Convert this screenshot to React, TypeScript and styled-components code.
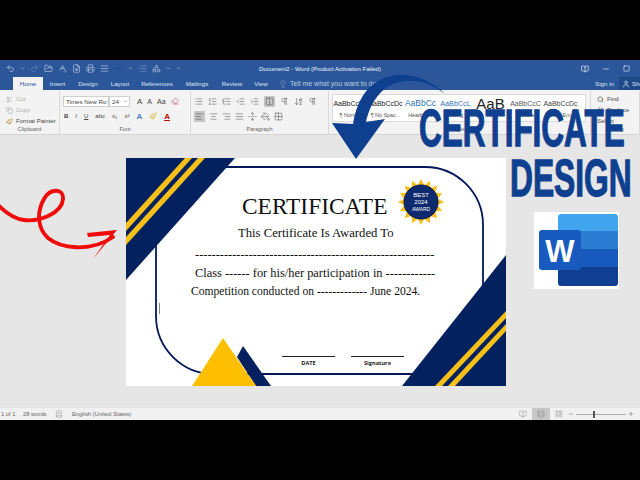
import React from 'react';
import styled, { createGlobalStyle } from 'styled-components';
import {
  AlignCenter, AlignJustify, AlignLeft, AlignRight, ArrowDownAZ, BookOpen, ChevronDown, Columns2,
  Copy, FileSearch, FolderOpen, Grid2x2, IndentDecrease, IndentIncrease, Lightbulb, LayoutGrid, List, ListOrdered,
  ListTree, Minus, PaintBucket, Paintbrush, Pilcrow, Plus, Redo2, Replace, Rows3, Scissors, Search,
  Shapes, Square, SpellCheck, Undo2, User, UnfoldVertical, BookText, Eraser, Printer,
} from 'lucide-react';

const GlobalStyle = createGlobalStyle`
  html, body { margin: 0; padding: 0; background: #000; }
`;

const Screen = styled.div`
  position: relative;
  width: 640px;
  height: 480px;
  padding: 60px 0;
  box-sizing: border-box;
  background: #000;
  overflow: hidden;
  font-family: "Liberation Sans", Arial, sans-serif;
`;

const Word = styled.div`
  height: 360px;
  display: flex;
  flex-direction: column;
`;

const TitleBar = styled.div`
  height: 17px;
  flex: none;
  background: #2b579a;
  color: #eef3fa;
  display: flex;
  align-items: center;
  padding: 0 10px 0 6px;
  font-size: 6px;
`;

const Qat = styled.div`
  display: flex;
  align-items: center;
  gap: 5px;
  width: 253px;
  flex: none;
`;

const DocTitle = styled.div`
  width: 122px;
  white-space: nowrap;
`;

const WinButtons = styled.div`
  margin-left: auto;
  display: flex;
  align-items: center;
  gap: 13px;
`;

const TabBar = styled.div`
  height: 13px;
  flex: none;
  background: #2b579a;
  color: #dce6f3;
  display: flex;
  align-items: stretch;
  font-size: 6.2px;
  padding-left: 13px;
`;

const Tab = styled.div<{ $active?: boolean; $w: number }>`
  width: ${p => p.$w}px;
  flex: none;
  display: flex;
  align-items: center;
  justify-content: center;
  background: ${p => (p.$active ? '#f3f3f3' : 'transparent')};
  color: ${p => (p.$active ? '#2b579a' : '#dce6f3')};
`;

const TellMe = styled.div`
  display: flex;
  align-items: center;
  gap: 3px;
  margin-left: 5px;
  font-size: 7px;
  opacity: 0.8;
`;

const Account = styled.div`
  margin-left: auto;
  display: flex;
  align-items: center;
  gap: 5px;
`;

const ShareBox = styled.div`
  display: flex;
  align-items: center;
  gap: 2px;
  height: 13px;
  width: 21px;
  background: #1f4a8a;
  padding-left: 3px;
  box-sizing: border-box;
  overflow: hidden;
  svg { flex: none; }
`;

const Ribbon = styled.div`
  height: 45px;
  flex: none;
  background: #f3f3f3;
  border-bottom: 1px solid #d4d4d4;
  box-sizing: border-box;
  display: flex;
  color: #444;
  font-size: 6px;
`;

const Group = styled.div<{ $w: number }>`
  width: ${p => p.$w}px;
  flex: none;
  box-sizing: border-box;
  border-right: 1px solid #d9d9d9;
  margin-top: 1px;
  padding: 3px 3px 0;
  display: flex;
  flex-direction: column;
`;

const GroupBody = styled.div`
  flex: 1;
  display: flex;
  flex-direction: column;
  gap: 3px;
  min-height: 0;
`;

const GroupLabel = styled.div`
  height: 9px;
  line-height: 9px;
  text-align: center;
  color: #666;
  font-size: 5.6px;
`;

const Row = styled.div<{ $gap?: number }>`
  display: flex;
  align-items: center;
  gap: ${p => p.$gap ?? 3}px;
  height: 12px;
  white-space: nowrap;
`;

const FieldRow = styled(Row)`
  margin-top: 1px;
`;

const ClipColumn = styled.div`
  display: flex;
  flex-direction: column;
  gap: 1px;
`;

const ClipRow = styled(Row)<{ $muted?: boolean }>`
  height: 10px;
  padding-left: 3px;
  color: ${p => (p.$muted ? '#aaa' : '#444')};
`;

const FontField = styled.div<{ $w: number }>`
  width: ${p => p.$w}px;
  height: 11px;
  box-sizing: border-box;
  background: #fff;
  border: 1px solid #cfcfcf;
  padding: 0 1px 0 2px;
  display: flex;
  align-items: center;
  justify-content: space-between;
  font-size: 6.2px;
  overflow: hidden;
  white-space: nowrap;
  svg { flex: none; }
`;

const FieldPair = styled.div`
  display: flex;
  margin-right: 2px;
`;

const Glyph = styled.span<{ $b?: boolean; $i?: boolean; $u?: boolean; $c?: string; $s?: number }>`
  font-weight: ${p => (p.$b ? 700 : 400)};
  font-style: ${p => (p.$i ? 'italic' : 'normal')};
  text-decoration: ${p => (p.$u ? 'underline' : 'none')};
  color: ${p => p.$c || '#444'};
  font-size: ${p => p.$s || 6}px;
`;

const Tool = styled.span<{ $on?: boolean }>`
  display: inline-flex;
  align-items: center;
  justify-content: center;
  height: 11px;
  padding: 0 1px;
  background: ${p => (p.$on ? '#c6c6c6' : 'transparent')};
`;

const Gallery = styled.div`
  width: 254px;
  height: 28px;
  flex: none;
  background: #fff;
  border: 1px solid #dadada;
  box-sizing: border-box;
  display: grid;
  grid-template-columns: repeat(7, 35px);
  overflow: hidden;
`;

const StyleCell = styled.div`
  display: flex;
  flex-direction: column;
  align-items: center;
  overflow: hidden;
  white-space: nowrap;
`;

const StyleSample = styled.div<{ $c: string; $s: number }>`
  height: 17px;
  line-height: 17px;
  color: ${p => p.$c};
  font-size: ${p => p.$s}px;
`;

const StyleName = styled.div`
  font-size: 5.4px;
  color: #555;
`;

const Canvas = styled.div`
  flex: 1;
  background: #e6e6e6;
  padding: 23px 0 0 126px;
  min-height: 0;
`;

const Paper = styled.div`
  position: relative;
  width: 380px;
  height: 228px;
  background: #fff;
  box-sizing: border-box;
  font-family: "Liberation Serif", "Times New Roman", serif;
  color: #111;
  overflow: hidden;
`;

const PaperArt = styled.svg`
  position: absolute;
  left: 0;
  top: 0;
`;

const PaperText = styled.div`
  position: relative;
  height: 100%;
  display: flex;
  flex-direction: column;
  padding-top: 35px;
  box-sizing: border-box;
`;

const CertTitle = styled.div`
  height: 27px;
  line-height: 27px;
  margin-left: 116px;
  font-size: 23.4px;
  white-space: nowrap;
`;

const CertLine = styled.div<{ $left: number; $mt: number; $size: number }>`
  margin: ${p => p.$mt}px 0 0 ${p => p.$left}px;
  height: 16px;
  line-height: 16px;
  font-size: ${p => p.$size}px;
  white-space: nowrap;
`;

const SignRow = styled.div`
  margin: 56px 0 0 156px;
  display: flex;
  gap: 16px;
`;

const SignBlock = styled.div`
  width: 53px;
  border-top: 1.5px solid #222;
  padding-top: 2px;
  text-align: center;
  font-family: "Open Sans", "Liberation Sans", sans-serif;
  font-size: 5.6px;
  font-weight: 700;
  color: #222;
`;

const Caret = styled.div`
  position: absolute;
  left: 33px;
  top: 145px;
  width: 1px;
  height: 11px;
  background: #888;
`;

const StatusBar = styled.div`
  height: 13px;
  flex: none;
  background: #f1f1f1;
  border-top: 1px solid #e2e2e2;
  box-sizing: border-box;
  display: flex;
  align-items: center;
  color: #666;
  font-size: 5.8px;
  padding: 0 6px 0 1px;
`;

const StatusText = styled.span<{ $w: number }>`
  width: ${p => p.$w}px;
  flex: none;
  white-space: nowrap;
`;

const StatusRight = styled.div`
  margin-left: auto;
  display: flex;
  align-items: center;
  height: 100%;
`;

const ViewButton = styled.div<{ $on?: boolean }>`
  width: 18px;
  height: 100%;
  display: flex;
  align-items: center;
  justify-content: center;
  background: ${p => (p.$on ? '#c8c8c8' : 'transparent')};
`;

const ZoomTrack = styled.div`
  position: relative;
  width: 50px;
  height: 1px;
  margin: 0 2px;
  background: #aaa;
`;

const ZoomThumb = styled.div`
  position: absolute;
  left: 17px;
  top: -3px;
  width: 2px;
  height: 7px;
  background: #555;
`;

const HeadWord = styled.div<{ $top: number; $left: number; $sx: number }>`
  position: absolute;
  top: ${p => p.$top}px;
  left: ${p => p.$left}px;
  font-size: 52px;
  line-height: 52px;
  font-weight: 700;
  color: #0f3f8f;
  -webkit-text-stroke: 1.3px #0f3f8f;
  white-space: nowrap;
  transform-origin: left top;
  transform: scaleX(${p => p.$sx});
`;

const Overlay = styled.svg<{ $top: number; $left: number }>`
  position: absolute;
  top: ${p => p.$top}px;
  left: ${p => p.$left}px;
`;

const i = { size: 9, strokeWidth: 1.3 };

const sunPoints = (() => {
  const pts: string[] = [];
  for (let n = 0; n < 32; n++) {
    const r = n % 2 === 0 ? 23 : 17;
    const a = (n * Math.PI) / 16;
    pts.push(`${(24 + r * Math.sin(a)).toFixed(1)},${(24 - r * Math.cos(a)).toFixed(1)}`);
  }
  return pts.join(' ');
})();

const styleSamples = [
  { text: 'AaBbCcDc', c: '#222', s: 7, name: '¶ Normal' },
  { text: 'AaBbCcDc', c: '#222', s: 7, name: '¶ No Spac...' },
  { text: 'AaBbCc', c: '#2e74b5', s: 8.5, name: 'Heading 1' },
  { text: 'AaBbCcL', c: '#2e74b5', s: 7.2, name: 'Heading 2' },
  { text: 'AaB', c: '#222', s: 15, name: 'Title' },
  { text: 'AaBbCcC', c: '#555', s: 7, name: 'Subtitle' },
  { text: 'AaBbCcDc', c: '#444', s: 7, name: 'Subtle Em...' },
];

const tabs = [
  { name: 'Home', w: 30 },
  { name: 'Insert', w: 29 },
  { name: 'Design', w: 32 },
  { name: 'Layout', w: 32 },
  { name: 'References', w: 42 },
  { name: 'Mailings', w: 38 },
  { name: 'Review', w: 32 },
  { name: 'View', w: 26 },
];

const App = () => (
  <Screen>
    <GlobalStyle />
    <Word>
      <TitleBar>
        <Qat>
          <Undo2 {...i} />
          <ChevronDown size={5} />
          <Redo2 {...i} opacity={0.4} />
          <FolderOpen {...i} />
          <SpellCheck {...i} />
          <FileSearch {...i} />
          <Printer {...i} />
          <AlignJustify {...i} />
          <Minus {...i} color="#1c3f7a" />
          <ChevronDown size={5} />
          <List {...i} opacity={0.6} />
          <Shapes {...i} />
          <ChevronDown size={5} />
          <ChevronDown size={5} />
        </Qat>
        <DocTitle>Document2 - Word (Product Activation Failed)</DocTitle>
        <WinButtons>
          <BookOpen size={8} />
          <Minus size={8} />
          <Square size={7} />
        </WinButtons>
      </TitleBar>
      <TabBar>
        {tabs.map(t => (
          <Tab key={t.name} $w={t.w} $active={t.name === 'Home'}>{t.name}</Tab>
        ))}
        <TellMe>
          <Lightbulb size={8} strokeWidth={1.2} />
          Tell me what you want to do...
        </TellMe>
        <Account>
          Sign in
          <ShareBox>
            <User size={8} />
            Share
          </ShareBox>
        </Account>
      </TabBar>
      <Ribbon>
        <Group $w={60}>
          <GroupBody>
            <ClipColumn>
              <ClipRow $muted><Scissors size={7} />Cut</ClipRow>
              <ClipRow $muted><Copy size={7} />Copy</ClipRow>
              <ClipRow><Paintbrush size={7} color="#b5842c" />Format Painter</ClipRow>
            </ClipColumn>
          </GroupBody>
          <GroupLabel>Clipboard</GroupLabel>
        </Group>
        <Group $w={131}>
          <GroupBody>
            <FieldRow $gap={5}>
              <FieldPair>
                <FontField $w={46}>Times New Ro<ChevronDown size={5} /></FontField>
                <FontField $w={21}>24<ChevronDown size={5} /></FontField>
              </FieldPair>
              <Glyph $s={8}>A</Glyph>
              <Glyph $s={7}>A</Glyph>
              <Glyph $s={7}>Aa</Glyph>
              <Eraser size={8} color="#c2607a" />
            </FieldRow>
            <Row $gap={5}>
              <Tool><Glyph $b>B</Glyph></Tool>
              <Tool><Glyph $i>I</Glyph></Tool>
              <Tool><Glyph $u>U</Glyph></Tool>
              <Tool><Glyph>abc</Glyph></Tool>
              <Tool><Glyph>x₂</Glyph></Tool>
              <Tool><Glyph>x²</Glyph></Tool>
              <Tool><Glyph $b $s={8} $c="#4a7ebb">A</Glyph></Tool>
              <Tool><Paintbrush size={8} color="#c9b52c" /></Tool>
              <Tool><Glyph $b $s={8} $u $c="#c00000">A</Glyph></Tool>
            </Row>
          </GroupBody>
          <GroupLabel>Font</GroupLabel>
        </Group>
        <Group $w={138}>
          <GroupBody>
            <FieldRow $gap={5}>
              <List {...i} />
              <ListOrdered {...i} />
              <ListTree {...i} />
              <IndentDecrease {...i} />
              <IndentIncrease {...i} />
              <Tool $on><Columns2 {...i} /></Tool>
              <Pilcrow {...i} />
              <ArrowDownAZ {...i} />
              <Pilcrow {...i} />
            </FieldRow>
            <Row $gap={4}>
              <Tool $on><AlignLeft {...i} /></Tool>
              <AlignCenter {...i} />
              <AlignRight {...i} />
              <AlignJustify {...i} />
              <UnfoldVertical {...i} />
              <PaintBucket {...i} />
              <Grid2x2 {...i} />
            </Row>
          </GroupBody>
          <GroupLabel>Paragraph</GroupLabel>
        </Group>
        <Group $w={262}>
          <GroupBody>
            <Gallery>
              {styleSamples.map(s => (
                <StyleCell key={s.name}>
                  <StyleSample $c={s.c} $s={s.s}>{s.text}</StyleSample>
                  <StyleName>{s.name}</StyleName>
                </StyleCell>
              ))}
            </Gallery>
          </GroupBody>
          <GroupLabel>Styles</GroupLabel>
        </Group>
        <Group $w={49}>
          <GroupBody>
            <ClipColumn>
              <ClipRow><Search size={7} />Find</ClipRow>
              <ClipRow><Replace size={7} />Replace</ClipRow>
              <ClipRow>Select</ClipRow>
            </ClipColumn>
          </GroupBody>
          <GroupLabel>Editing</GroupLabel>
        </Group>
      </Ribbon>
      <Canvas>
        <Paper>
          <PaperArt width="380" height="228" viewBox="0 0 380 228">
            <rect x="30" y="9" width="327" height="207" rx="58" fill="none" stroke="#04185a" strokeWidth="1.8" />
            <polygon points="0,0 109,0 0,122" fill="#02215e" />
            <polygon points="59,0 66,0 0,73 0,65" fill="#f6c018" />
            <polygon points="72,0 79,0 0,87 0,79" fill="#f6c018" />
            <polygon points="380,97 380,228 276,228" fill="#02215e" />
            <polygon points="380,153 380,160 316,228 309,228" fill="#f6c018" />
            <polygon points="380,166 380,173 329,228 322,228" fill="#f6c018" />
            <polygon points="117,188 145,228 130,228 111,199" fill="#02215e" />
            <polygon points="97,180 130,228 66,228" fill="#fdbf00" />
            <g transform="translate(271,20)">
              <polygon points={sunPoints} fill="#f7bf1d" />
              <circle cx="24" cy="24" r="17" fill="#0d2a6e" stroke="#07194a" strokeWidth="1" />
              <g fill="#fff" fontSize="6" textAnchor="middle" fontFamily="Liberation Sans, sans-serif">
                <text x="24" y="19">BEST</text>
                <text x="24" y="26">2024</text>
                <text x="24" y="33" fontSize="5">AWARD</text>
              </g>
            </g>
          </PaperArt>
          <Caret />
          <PaperText>
            <CertTitle>CERTIFICATE</CertTitle>
            <CertLine $left={112} $mt={5} $size={12.7}>This Certificate Is Awarded To</CertLine>
            <CertLine $left={69} $mt={5} $size={12.4}>----------------------------------------------------------</CertLine>
            <CertLine $left={69} $mt={3} $size={12.4}>Class ------ for his/her participation in ------------</CertLine>
            <CertLine $left={65} $mt={3} $size={11.6}>Competition conducted on ------------- June 2024.</CertLine>
            <SignRow>
              <SignBlock>DATE</SignBlock>
              <SignBlock>Signature</SignBlock>
            </SignRow>
          </PaperText>
        </Paper>
      </Canvas>
      <StatusBar>
        <StatusText $w={22}>1 of 1</StatusText>
        <StatusText $w={32}>28 words</StatusText>
        <StatusText $w={17}><BookText size={8} strokeWidth={1} /></StatusText>
        <StatusText $w={70}>English (United States)</StatusText>
        <StatusRight>
          <ViewButton><BookOpen size={8} strokeWidth={1} /></ViewButton>
          <ViewButton $on><Rows3 size={8} strokeWidth={1} /></ViewButton>
          <ViewButton><LayoutGrid size={8} strokeWidth={1} /></ViewButton>
          <Minus size={6} />
          <ZoomTrack><ZoomThumb /></ZoomTrack>
          <Plus size={6} />
        </StatusRight>
      </StatusBar>
    </Word>

    <Overlay $top={70} $left={325} width="125" height="95" viewBox="0 0 125 95">
      <path
        d="M120 24 C104 8 82 2 66 6 C46 11 33 25 28 54 L7 53 L31 89 L60 49 L41 52 C46 30 58 16 74 12 C90 8 106 13 120 24 Z"
        fill="#0f3f8f"
      />
    </Overlay>
    <Overlay $top={175} $left={0} width="125" height="90" viewBox="0 0 125 90">
      <path
        d="M-2 30 C6 38 14 44 24 45 C40 47 62 38 63 24 C64 13 50 13 44 24 C36 38 38 54 48 63 C60 73 90 78 113 62"
        fill="none"
        stroke="#f00a0a"
        strokeWidth="3.8"
        strokeLinecap="round"
      />
      <path d="M87 58 L117 55 L93 84 L110 60 L88 62 Z" fill="#f00a0a" />
    </Overlay>

    <HeadWord $top={102} $left={419} $sx={0.605}>CERTIFICATE</HeadWord>
    <HeadWord $top={152} $left={510} $sx={0.61}>DESIGN</HeadWord>

    <Overlay $top={212} $left={534} width="85" height="77" viewBox="0 0 85 77">
      <rect width="85" height="77" fill="#fff" />
      <path d="M24 5 a3 3 0 0 1 3 -3 H81 a3 3 0 0 1 3 3 V19 H24 Z" fill="#41a5ee" />
      <rect x="24" y="19" width="60" height="18" fill="#2b7cd3" />
      <rect x="24" y="37" width="60" height="18" fill="#185abd" />
      <path d="M24 55 H84 V71 a3 3 0 0 1 -3 3 H27 a3 3 0 0 1 -3 -3 Z" fill="#103f91" />
      <rect x="5" y="18" width="42" height="40" rx="3" fill="#185abd" />
      <text x="26" y="50" fill="#fff" fontSize="31" fontWeight="700" textAnchor="middle" fontFamily="Liberation Sans, sans-serif">W</text>
    </Overlay>
  </Screen>
);

export default App;
